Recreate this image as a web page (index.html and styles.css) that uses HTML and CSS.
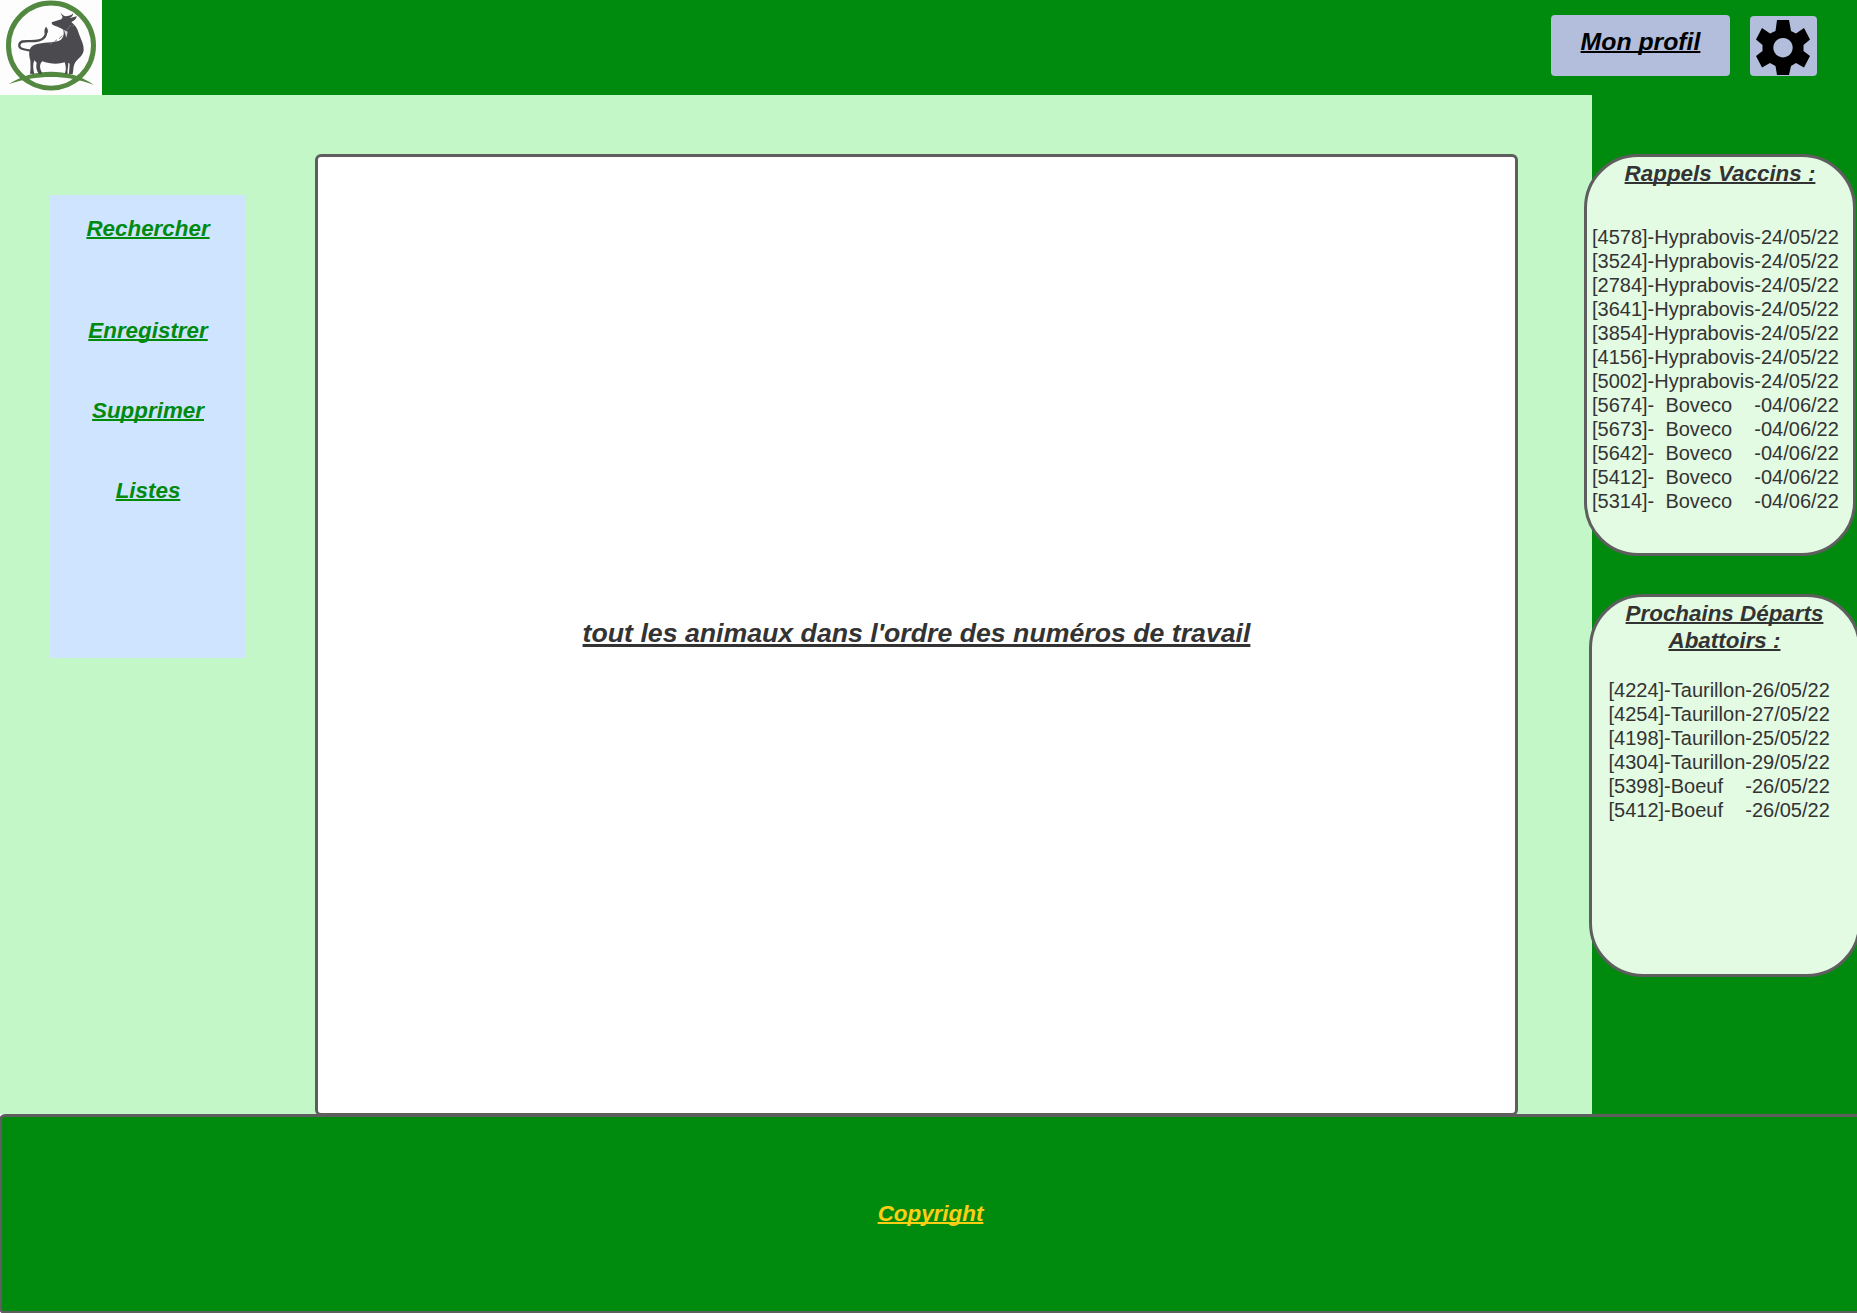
FILE: index.html
```html
<!DOCTYPE html>
<html lang="fr">
<head>
<meta charset="utf-8">
<title>Gestion du troupeau</title>
<link rel="stylesheet" href="styles.css">
</head>
<body>
<header class="topbar">
  <a class="logo" href="#" aria-label="Accueil">
    <svg viewBox="0 0 306 285" width="102" height="95">
      <circle cx="153" cy="136.500" r="127.500" fill="none" stroke="#52883f" stroke-width="15"/>
      <path d="M36 263 Q153 198 270 263 L240 285 L66 285Z" fill="#fdfdfd"/>
      <path d="M64 228 A127.500 127.500 0 0 0 242 228" fill="none" stroke="#52883f" stroke-width="14"/>
      <path d="M26 253 C65 226 110 215 153 215 C196 215 243 226 282 255 C237 238 195 231 153 231 C111 231 68 237 26 253Z" fill="#52883f"/>
      <path d="M95 152 C79 150 55 148 58 134 C62 116 91 128 117 121 C132 117 139 108 138 94" fill="none" stroke="#4b4a4e" stroke-width="7" stroke-linecap="round"/>
      <path d="M138 80 C145 87 146 97 139 104 C132 99 131 91 138 80Z" fill="#4b4a4e"/>
      <path d="M155 67 L184 58 L188 51 L181 38 C187 43 190 47 196 49 C205 49 214 47 219 40 C220 47 215 52 208 55 L230 49 C230 57 221 63 214 66 C224 75 233 85 236 99 C241 115 252 132 251 150 C250 167 233 176 226 187 C219 198 221 209 218 222 L207 222 L209 191 L205 188 C205 202 201 211 203 222 L194 221 C200 208 197 196 194 187 C173 194 147 191 127 184 C117 193 119 207 127 220 L118 223 C109 212 107 201 110 188 L103 181 C98 193 99 207 103 222 L90 221 C93 207 91 193 91 181 C86 165 85 146 98 137 C119 126 149 130 172 124 C187 120 194 107 190 89 C183 83 173 80 164 77 L156 73Z" fill="#4b4a4e"/>
      <path d="M192 90 L203 95 L199 113Z" fill="#d8d8da"/>
      <path d="M149 132 L158 128 M164 125 L171 119 M177 116 L187 107 M199 91 L214 74 M217 79 L222 75" stroke="#77767a" stroke-width="3"/>
    </svg>
  </a>
  <nav class="account">
    <a class="profile" href="#">Mon profil</a>
    <a class="settings" href="#" aria-label="Paramètres">
      <svg viewBox="0 0 54 55" width="54" height="55">
        <path fill-rule="evenodd" d="M21 0 H33 L35 11 L40 13.500 L48 8 L54 19.500 L47.500 25 V31 L54 36 L48 47.500 L40 43 L35 46 L33 55 H21 L19.500 46 L14 43 L6 47.500 L0 36 L6.500 31 V25 L0 19.500 L6 8 L14 13.500 L19.500 11Z M27 18 a9.700 9.700 0 1 0 .01 0Z"/>
      </svg>
    </a>
  </nav>
</header>

<div class="content">
  <nav class="menu">
    <a class="search" href="#">Rechercher</a>
    <a href="#">Enregistrer</a>
    <a href="#">Supprimer</a>
    <a href="#">Listes</a>
  </nav>
  <main class="board">
    <h1>tout les animaux dans l'ordre des numéros de travail</h1>
  </main>
  <aside class="reminders">
    <section class="card vaccines">
      <h2>Rappels Vaccins :</h2>
<pre>[4578]-Hyprabovis-24/05/22
[3524]-Hyprabovis-24/05/22
[2784]-Hyprabovis-24/05/22
[3641]-Hyprabovis-24/05/22
[3854]-Hyprabovis-24/05/22
[4156]-Hyprabovis-24/05/22
[5002]-Hyprabovis-24/05/22
[5674]-  Boveco    -04/06/22
[5673]-  Boveco    -04/06/22
[5642]-  Boveco    -04/06/22
[5412]-  Boveco    -04/06/22
[5314]-  Boveco    -04/06/22</pre>
    </section>
    <section class="card departures">
      <h2>Prochains Départs<br>Abattoirs :</h2>
<pre>[4224]-Taurillon-26/05/22
[4254]-Taurillon-27/05/22
[4198]-Taurillon-25/05/22
[4304]-Taurillon-29/05/22
[5398]-Boeuf    -26/05/22
[5412]-Boeuf    -26/05/22</pre>
    </section>
  </aside>
</div>

<footer class="footer"><a href="#">Copyright</a></footer>
</body>
</html>
```
FILE: styles.css
```css
* { box-sizing: border-box; }

body {
  margin: 0;
  width: 1857px;
  height: 1313px;
  overflow: hidden;
  background: #fff;
  color: #333;
  font-family: "Liberation Sans", Arial, sans-serif;
}

a, h1, h2 {
  margin: 0;
  color: inherit;
  font-size: 22.4px;
  font-weight: bold;
  font-style: italic;
  line-height: 27px;
  text-decoration: underline;
  text-decoration-thickness: 2px;
  text-decoration-skip-ink: none;
}

svg { display: block; }

.topbar {
  display: flex;
  justify-content: space-between;
  height: 95px;
  padding-right: 40px;
  background: #008a0e;
}

.logo {
  width: 102px;
  height: 95px;
  background: #fdfdfd;
}

.account {
  display: flex;
  gap: 20px;
  padding-top: 15px;
}

.profile {
  width: 179px;
  height: 61px;
  padding-top: 12px;
  border-radius: 4px;
  background: #b2bedb;
  color: #000;
  font-size: 24.8px;
  line-height: 30px;
  text-align: center;
}

.settings {
  width: 67px;
  height: 60px;
  margin-top: 1px;
  padding: 4px 0 0 5.5px;
  border-radius: 4px;
  background: #b2bedb;
  color: #000;
}

.content {
  display: grid;
  grid-template-columns: 196px 1203px 273px;
  column-gap: 69px;
  height: 1019px;
  padding-left: 50px;
  background: linear-gradient(to right, #c3f7c8 1592px, #008a0e 1592px);
}

.menu {
  display: flex;
  flex-direction: column;
  align-items: center;
  gap: 53px;
  height: 463px;
  margin-top: 100px;
  padding-top: 20px;
  background: #cfe4ff;
  color: #008a0e;
}

.search { margin-bottom: 22px; }

.board {
  display: flex;
  justify-content: center;
  align-items: center;
  height: 962px;
  margin-top: 59px;
  padding-bottom: 5px;
  border: 3px solid #5e5e5e;
  border-radius: 6px;
  background: #fff;
}

.board h1 {
  font-size: 26.7px;
  line-height: 32px;
  text-decoration-thickness: 3px;
}

.reminders {
  display: flex;
  flex-direction: column;
  gap: 38px;
  padding-top: 59px;
  margin-left: -3px;
}

.card {
  flex: none;
  width: 272px;
  padding-top: 3px;
  border: 3px solid #5e5e5e;
  border-radius: 54px;
  background: #e3fae3;
}

.card h2 { text-align: center; }

.card pre {
  margin: 0;
  font: 20px/24px "Liberation Sans", Arial, sans-serif;
}

.vaccines { height: 402px; }
.vaccines pre { padding: 37.5px 0 0 5px; }

.departures {
  height: 383px;
  margin-left: 4.5px;
}
.departures pre { padding: 24px 0 0 17px; }

.footer {
  position: relative;
  display: flex;
  justify-content: center;
  align-items: center;
  width: 1863px;
  height: 200px;
  margin-left: -1px;
  padding-bottom: 1px;
  border: 3px solid #5e5e5e;
  border-radius: 6px;
  background: #008a0e;
  color: #fcce14;
}
```
